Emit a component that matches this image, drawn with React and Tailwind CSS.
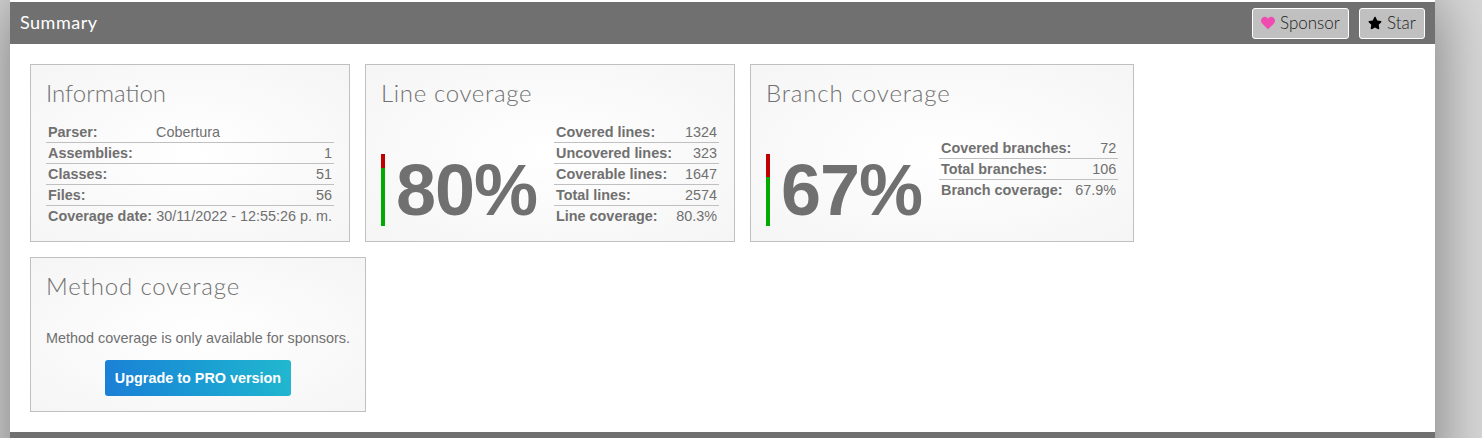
import React from "react";
import { FaHeart, FaStar } from "react-icons/fa";

const Heading = ({ children, className }) => (
  <h2 className={"font-['Lato',sans-serif] font-light text-[24px] leading-[28px] text-[#707070] mb-[14px] " + className}>{children}</h2>
);

const Card = ({ className, children }) => (
  <div className={"border border-[#c0c0c0] bg-[radial-gradient(ellipse_at_center,#ffffff_0%,#f5f5f5_100%)] px-[15px] pt-[14px] " + className}>{children}</div>
);

const Rows = ({ rows, className }) => (
  <table className={"border-collapse text-[14.4px] leading-[16px] text-[#707070] " + className}>
    <tbody>
      {rows.map(([k, v, left], i) => {
        const pad = i === 0 ? " pt-[3px] pb-[1px]" : " py-[2px]";
        return (
          <tr key={k} className={i < rows.length - 1 ? "border-b border-[#c0c0c0]" : ""}>
            <th className={"text-left font-bold px-[2px] h-[21px] whitespace-nowrap" + pad}>{k}</th>
            <td className={(left ? "text-left" : "text-right") + " px-[2px] h-[21px] whitespace-nowrap" + pad}>{v}</td>
          </tr>
        );
      })}
    </tbody>
  </table>
);

const Big = ({ value, red }) => (
  <div className="flex items-end">
    <div className="flex flex-col w-[4px] h-[72px]">
      <div className="bg-[#c00000]" style={{ height: red }} />
      <div className="bg-[#00aa00] flex-1" />
    </div>
    <div className="ml-[11px] font-bold text-[72px] leading-[72px] text-[#707070] tracking-[-1px] w-[158px] whitespace-nowrap">{value}</div>
  </div>
);

function Btn({ icon, label, className }) {
  return (
    <div className={"flex items-center h-[31px] bg-[#c0c0c0] border border-white rounded-[3px] text-[#222] font-['Lato',sans-serif] font-light text-[17px] " + className}>
      {icon}
      <span className="ml-[5px]">{label}</span>
    </div>
  );
}

export default function App() {
  return (
    <div className="h-[438px] w-[1482px] overflow-hidden bg-[#d8d8d8] font-['Liberation_Sans',sans-serif]">
      <div className="ml-[10px] pt-[2px] w-[1425px] bg-white shadow-[0_0_60px_#777777] h-[500px]">
        <div className="h-[42px] bg-[#707070] flex items-center justify-between pl-[10px] pr-[10px]">
          <span className="font-['Lato',sans-serif] font-normal text-[18px] leading-[20px] mb-[3px] tracking-[0.5px] text-white">Summary</span>
          <div className="flex gap-[10px]">
            <Btn icon={<FaHeart className="text-[#f04bb0] text-[14px]" />} label="Sponsor" className="w-[97px] pl-[8px]" />
            <Btn icon={<FaStar className="text-black text-[14px]" />} label="Star" className="w-[66px] pl-[8px]" />
          </div>
        </div>
        <div className="px-[20px] pt-[20px] pb-[20px] flex flex-col gap-[15px] h-[388px]">
          <div className="flex gap-[15px]">
            <Card className="w-[320px] h-[178px]">
              <Heading className="tracking-[0px]">Information</Heading>
              <Rows
                className="w-[288px]"
                rows={[
                  ["Parser:", "Cobertura", true],
                  ["Assemblies:", "1"],
                  ["Classes:", "51"],
                  ["Files:", "56"],
                  ["Coverage date:", "30/11/2022 - 12:55:26 p. m."],
                ]}
              />
            </Card>
            <Card className="w-[370px] h-[178px]">
              <Heading className="tracking-[0.65px]">Line coverage</Heading>
              <div className="flex items-start">
                <div className="pt-[33px]"><Big value="80%" red={14} /></div>
                <Rows
                  className="w-[165px]"
                  rows={[
                    ["Covered lines:", "1324"],
                    ["Uncovered lines:", "323"],
                    ["Coverable lines:", "1647"],
                    ["Total lines:", "2574"],
                    ["Line coverage:", "80.3%"],
                  ]}
                />
              </div>
            </Card>
            <Card className="w-[384px] h-[178px]">
              <Heading className="tracking-[0.85px]">Branch coverage</Heading>
              <div className="flex items-start">
                <div className="pt-[33px]"><Big value="67%" red={23} /></div>
                <Rows
                  className="w-[179px] mt-[16px]"
                  rows={[
                    ["Covered branches:", "72"],
                    ["Total branches:", "106"],
                    ["Branch coverage:", "67.9%"],
                  ]}
                />
              </div>
            </Card>
          </div>
          <Card className="w-[336px] h-[155px]">
            <Heading className="tracking-[0.85px]">Method coverage</Heading>
            <p className="text-[14.4px] leading-[16px] text-[#707070] mt-[30px] whitespace-nowrap">Method coverage is only available for sponsors.</p>
            <div className="flex justify-center mt-[14px]">
              <div className="w-[186px] h-[36px] pt-[1px] rounded-[3px] bg-linear-75 from-[#1c7ed6] to-[#22b8cf] text-white font-bold text-[14.4px] flex items-center justify-center">Upgrade to PRO version</div>
            </div>
          </Card>
        </div>
        <div className="h-[20px] bg-[#707070]" />
      </div>
    </div>
  );
}
